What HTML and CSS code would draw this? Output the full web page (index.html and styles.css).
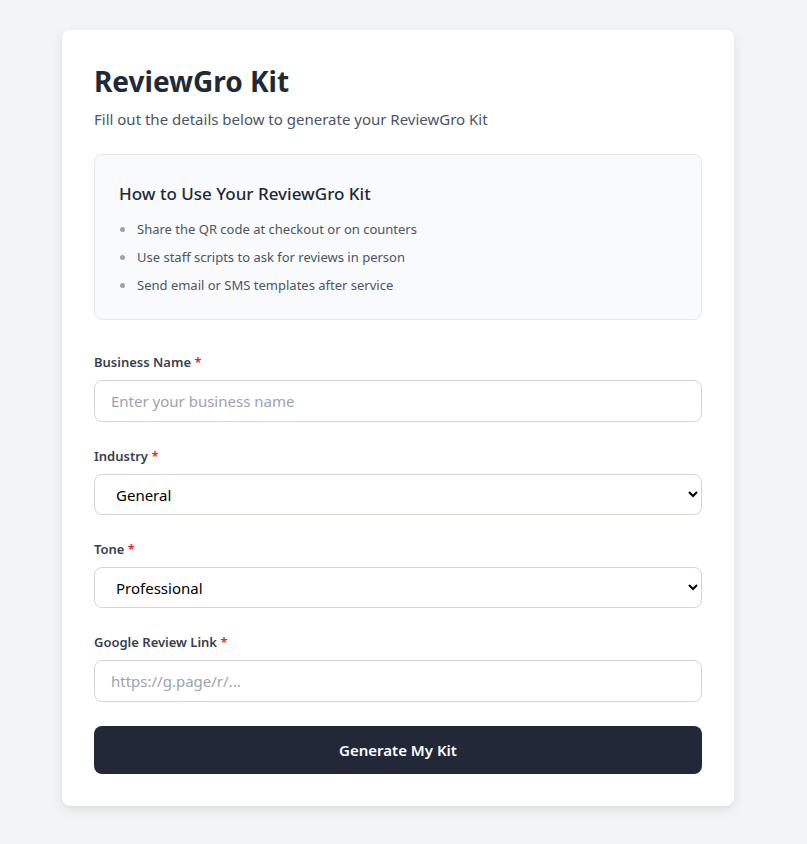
FILE: index.html
```html
<!DOCTYPE html>
<html lang="en">
<head>
<meta charset="utf-8">
<title>ReviewGro Kit</title>
<link rel="stylesheet" href="styles.css">
</head>
<body>
<main class="page">
  <section class="card">
    <h1 class="title">ReviewGro Kit</h1>
    <p class="subtitle">Fill out the details below to generate your ReviewGro Kit</p>

    <div class="info">
      <h2 class="info-title">How to Use Your ReviewGro Kit</h2>
      <ul class="info-list">
        <li>Share the QR code at checkout or on counters</li>
        <li>Use staff scripts to ask for reviews in person</li>
        <li>Send email or SMS templates after service</li>
      </ul>
    </div>

    <form class="form">
      <div class="field">
        <label class="label" for="biz">Business Name <span class="req">*</span></label>
        <input class="control" id="biz" type="text" placeholder="Enter your business name">
      </div>
      <div class="field">
        <label class="label" for="ind">Industry <span class="req">*</span></label>
        <select class="control select" id="ind">
          <option>General</option>
        </select>
      </div>
      <div class="field">
        <label class="label" for="tone">Tone <span class="req">*</span></label>
        <select class="control select" id="tone">
          <option>Professional</option>
        </select>
      </div>
      <div class="field">
        <label class="label" for="link">Google Review Link <span class="req">*</span></label>
        <input class="control" id="link" type="text" placeholder="https://g.page/r/...">
      </div>
      <button class="submit" type="button">Generate My Kit</button>
    </form>
  </section>
</main>
</body>
</html>
```

FILE: styles.css
```css
* { box-sizing: border-box; }
html, body { margin: 0; padding: 0; }
body {
  background: #f3f4f6;
  font-family: "Noto Sans", "Open Sans", sans-serif;
  color: #1f2937;
}
.page {
  padding: 30px 0 39px 62px;
}
.card {
  width: 672px;
  background: #ffffff;
  border-radius: 8px;
  box-shadow: 0 4px 12px rgba(0,0,0,0.08), 0 1px 3px rgba(0,0,0,0.05);
  padding: 32px 32px 32px;
}
.title {
  margin: 0;
  font-size: 28px;
  line-height: 38px;
  font-weight: 700;
  color: #1f2937;
}
.subtitle {
  margin: 8px 0 0;
  font-size: 15px;
  line-height: 22px;
  color: #4b5563;
}
.info {
  margin-top: 24px;
  background: #f8fafc;
  border: 1px solid #e5e7eb;
  border-radius: 8px;
  padding: 26px 24px 22px;
  height: 166px;
}
.info-title {
  margin: 0 0 8px;
  font-size: 17px;
  line-height: 26px;
  font-weight: 500;
  color: #1f2937;
}
.info-list {
  margin: 0;
  padding: 0;
  list-style: none;
}
.info-list li {
  position: relative;
  padding-left: 18px;
  font-size: 13px;
  line-height: 28px;
  color: #4b5563;
}
.info-list li::before {
  content: "";
  position: absolute;
  left: 1px;
  top: 12px;
  width: 5px;
  height: 5px;
  border-radius: 50%;
  background: #9ca3af;
}
.form {
  margin-top: 32px;
  display: flex;
  flex-direction: column;
}
.field {
  display: flex;
  flex-direction: column;
  margin-bottom: 24px;
}
.label {
  font-size: 13px;
  line-height: 20px;
  font-weight: 600;
  color: #374151;
  margin-bottom: 8px;
}
.req { color: #dc2626; }
.control {
  width: 100%;
  height: 42px;
  border: 1px solid #d1d5db;
  border-radius: 8px;
  padding: 0 16px;
  font-family: inherit;
  font-size: 15px;
  color: #111827;
  background: #ffffff;
}
.control::placeholder { color: #9ca3af; }
.select {
  height: 41px;
  padding: 0 12px 0 17px;
  color: #000;
}
.submit {
  height: 48px;
  border: none;
  border-radius: 8px;
  background: #222837;
  color: #ffffff;
  font-family: inherit;
  font-size: 15px;
  font-weight: 600;
}
```
